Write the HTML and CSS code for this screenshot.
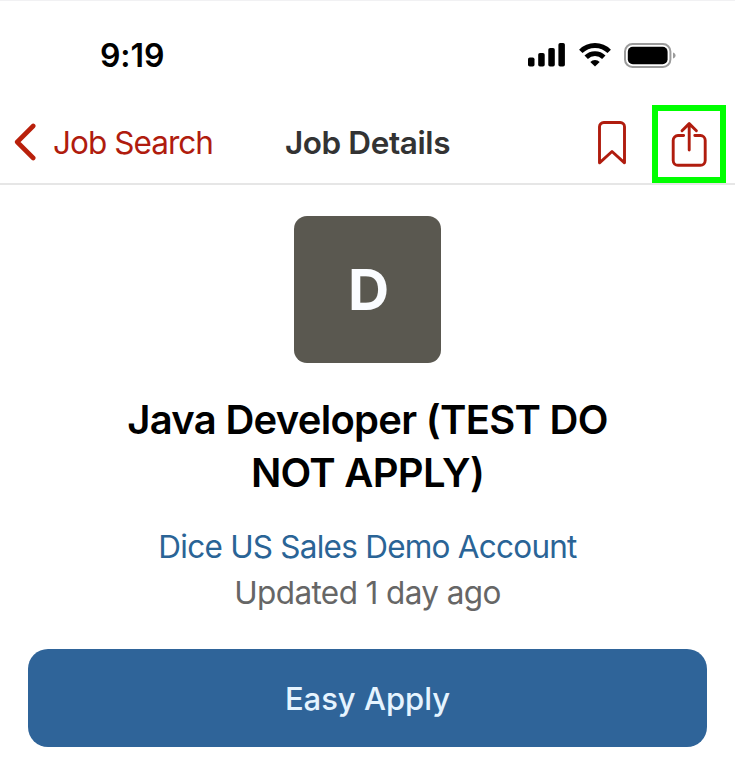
FILE: index.html
```html
<!DOCTYPE html>
<html lang="en">
<head>
  <meta charset="utf-8">
  <title>Job Details</title>
  <link rel="stylesheet" href="styles.css">
</head>
<body>
  <div class="status-bar">
    <span class="time">9:19</span>
    <div class="status-icons">
      <svg class="signal" width="37" height="24" viewBox="0 0 37 24">
        <rect x="0" y="14.5" width="6.5" height="9" rx="1.8"/>
        <rect x="10.2" y="10" width="6.5" height="13.5" rx="1.8"/>
        <rect x="20.3" y="5" width="6.5" height="18.5" rx="1.8"/>
        <rect x="30.4" y="0" width="6.5" height="23.5" rx="1.8"/>
      </svg>
      <svg class="wifi" width="32" height="24" viewBox="0 0 32 24">
        <path class="wave" d="M1.8 8.4a20 20 0 0 1 28.4 0"/>
        <path class="wave" d="M7.2 14.2a12.5 12.5 0 0 1 17.6 0"/>
        <path d="M16 23.6l-4.7-4.7a6.8 6.8 0 0 1 9.4 0z"/>
      </svg>
      <svg class="battery" width="52" height="26" viewBox="0 0 52 26">
        <rect class="battery-case" x="1" y="1" width="45.4" height="23" rx="7.5"/>
        <rect x="3.8" y="3.7" width="39.8" height="17.5" rx="5"/>
        <path class="battery-tip" d="M49 9.5c3.4 1 3.4 5 0 6z"/>
      </svg>
    </div>
  </div>

  <div class="navbar">
    <a class="back" href="#">
      <svg width="22" height="38" viewBox="0 0 22 38">
        <path d="M19.2 3L3.2 19l16 16"/>
      </svg>
      <span>Job Search</span>
    </a>
    <h1 class="nav-title">Job Details</h1>
    <div class="actions">
      <a class="bookmark" href="#">
        <svg width="28" height="44" viewBox="0 0 28 44">
          <path d="M1.5 41.8V5.8a4.3 4.3 0 0 1 4.3-4.3h16.4a4.3 4.3 0 0 1 4.3 4.3v36L14 30.5z"/>
        </svg>
      </a>
      <a class="share" href="#">
        <svg width="36" height="46" viewBox="0 0 36 46">
          <path d="M12.6 14.5H7a4.8 4.8 0 0 0-4.8 4.8v20.2A4.8 4.8 0 0 0 7 44.3h22.4a4.8 4.8 0 0 0 4.8-4.8V19.3a4.8 4.8 0 0 0-4.8-4.8h-5.6"/>
          <path d="M18.2 29V2.6M11 9.8l7.2-7.2 7.2 7.2"/>
        </svg>
      </a>
    </div>
  </div>

  <div class="job">
    <div class="logo">D</div>
    <h2 class="job-title">Java Developer (TEST DO<br>NOT APPLY)</h2>
    <a class="company" href="#">Dice US Sales Demo Account</a>
    <p class="updated">Updated 1 day ago</p>
    <button class="apply">Easy Apply</button>
  </div>
</body>
</html>
```
FILE: styles.css
```css
* {
  box-sizing: border-box;
}
body {
  margin: 0;
  background: #fff;
  font-family: Inter, "Liberation Sans", sans-serif;
  font-size: 31.5px;
  overflow: hidden;
}
svg {
  display: block;
  flex: none;
}
a {
  text-decoration: none;
}
.status-bar {
  display: flex;
  justify-content: space-between;
  height: 105px;
  padding: 42px 59px 0 100px;
  border-top: 1px solid #f1f1f3;
}
.time {
  height: 26px;
  line-height: 26px;
  font-size: 32px;
  font-weight: 600;
  letter-spacing: -0.1px;
}
.status-icons {
  display: flex;
  gap: 13px;
  height: 26px;
}
.signal {
  margin-right: 1px;
}
.battery-case {
  fill: none;
  stroke: #9b9b9b;
  stroke-width: 2;
}
.battery-tip {
  fill: #9b9b9b;
}
.wave {
  fill: none;
  stroke: #000;
  stroke-width: 4.8;
}
.navbar {
  display: grid;
  grid-template-columns: 1fr auto 1fr;
  align-items: center;
  height: 80px;
  padding: 0 9px;
  border-bottom: 2px solid #e6e6e6;
}
.navbar svg {
  fill: none;
  stroke: #b01c0e;
  stroke-width: 2.9;
  stroke-linecap: round;
  stroke-linejoin: round;
}
.back {
  display: flex;
  align-items: center;
  gap: 17px;
  margin-bottom: 4px;
  padding-left: 5px;
  color: #b01c0e;
  letter-spacing: -0.95px;
  white-space: nowrap;
}
.navbar .back svg {
  stroke: #b9200b;
  stroke-width: 4.6;
}
.nav-title {
  margin: 0 0 4px;
  color: #333;
  font-size: 31.5px;
  font-weight: 600;
  letter-spacing: -0.4px;
}
.actions {
  display: flex;
  justify-content: flex-end;
  align-items: center;
  gap: 26px;
}
.bookmark {
  margin-bottom: 3px;
}
.share {
  display: flex;
  justify-content: center;
  align-items: center;
  width: 74px;
  height: 78px;
  padding-bottom: 1px;
  border: 6px solid #00ff00;
}
.job {
  display: flex;
  flex-direction: column;
  align-items: center;
  padding: 31px 28px 0;
}
.logo {
  width: 147px;
  height: 147px;
  padding-left: 2px;
  border-radius: 13px;
  background: #5a5850;
  color: #fafcff;
  font-size: 57px;
  font-weight: 700;
  line-height: 147px;
  text-align: center;
}
.job-title {
  margin: 30px 0 25px;
  color: #000;
  font-size: 40px;
  font-weight: 600;
  letter-spacing: -0.72px;
  line-height: 53px;
  text-align: center;
}
.company {
  color: #2a6496;
  letter-spacing: -0.76px;
  line-height: 46px;
}
.updated {
  margin: 0 0 33px;
  color: #666;
  letter-spacing: -0.6px;
  line-height: 46px;
}
.apply {
  width: 100%;
  height: 98px;
  padding: 0;
  border: none;
  border-radius: 20px;
  background: #2f6499;
  color: #e6f4ff;
  font-family: inherit;
  font-size: 31px;
  font-weight: 500;
}
```
